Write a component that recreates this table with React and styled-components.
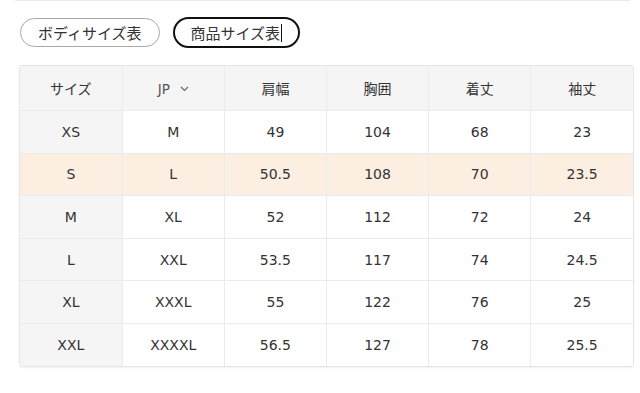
import React from 'react';
import styled, { createGlobalStyle } from 'styled-components';

const Global = createGlobalStyle`
    body {
        margin: 0;
        background: #fff;
        font-family: 'DejaVu Sans', 'Noto Sans CJK JP', sans-serif;
        color: #333;
    }
`

const sizes = [
    ['XS', 'M', '49', '104', '68', '23'],
    ['S', 'L', '50.5', '108', '70', '23.5'],
    ['M', 'XL', '52', '112', '72', '24'],
    ['L', 'XXL', '53.5', '117', '74', '24.5'],
    ['XL', 'XXXL', '55', '122', '76', '25'],
    ['XXL', 'XXXXL', '56.5', '127', '78', '25.5'],
];

export default function App() {
    return (
        <>
            <Global />
            <Page>
                <TopRule />
                <Tabs>
                    <Pill>ボディサイズ表</Pill>
                    <Pill $active>
                        商品サイズ表<Caret />
                    </Pill>
                </Tabs>
                <TableWrap>
                    <Table>
                        <thead>
                            <tr>
                                <HeadCell>サイズ</HeadCell>
                                <HeadCell>
                                    <Unit>
                                        JP
                                        <svg width="9" height="6" viewBox="0 0 9 6">
                                            <path d="M1 1l3.5 3.5L8 1" fill="none" stroke="#666" strokeWidth="1.1" />
                                        </svg>
                                    </Unit>
                                </HeadCell>
                                <HeadCell>肩幅</HeadCell>
                                <HeadCell>胸囲</HeadCell>
                                <HeadCell>着丈</HeadCell>
                                <HeadCell>袖丈</HeadCell>
                            </tr>
                        </thead>
                        <tbody>
                            {sizes.map((row, i) => (
                                <Row key={row[0]} $highlight={i === 1}>
                                    {row.map((v, j) => (
                                        <Cell key={j} $first={j === 0} $highlight={i === 1}>{v}</Cell>
                                    ))}
                                </Row>
                            ))}
                        </tbody>
                    </Table>
                </TableWrap>
            </Page>
        </>
    );
}

const Page = styled.div`
    width: 640px;
    height: 393px;
    overflow: hidden;
`
const TopRule = styled.div`
    height: 1px;
    margin: 0 10px 0 15px;
    background: #ebebeb;
`
const Tabs = styled.div`
    display: flex;
    align-items: center;
    gap: 13px;
    margin-top: 16px;
    padding-left: 20px;
`
const Pill = styled.div`
    display: flex;
    align-items: center;
    height: 27px;
    padding: 0 ${p => p.$active ? '16px' : '17px'};
    border: ${p => p.$active ? '2px solid #111' : '1px solid #a8a8a8'};
    margin: ${p => p.$active ? '0' : '1px 0'};
    border-radius: 16px;
    font-family: 'Noto Sans CJK JP', sans-serif;
    font-size: 15px;
    color: #333;
    line-height: 1;
`
const Caret = styled.span`
    display: inline-block;
    width: 1px;
    height: 18px;
    margin-left: 1px;
    background: #111;
`
const TableWrap = styled.div`
    margin: 17px 0 0 19px;
    width: 613px;
    border: 1px solid #e6e6e6;
    border-radius: 3px;
    box-shadow: 0 1px 2px rgba(0, 0, 0, 0.06);
    overflow: hidden;
`
const Table = styled.table`
    width: 100%;
    border-collapse: collapse;
    table-layout: fixed;
`
const HeadCell = styled.th`
    height: 44px;
    padding: 0;
    background: #f5f5f5;
    border-left: 1px solid #ebebeb;
    font-family: 'Noto Sans CJK JP', sans-serif;
    font-weight: normal;
    font-size: 14px;
    color: #333;
    &:first-child {
        border-left: none;
    }
`
const Unit = styled.span`
    display: inline-flex;
    align-items: center;
    gap: 10px;
    font-family: 'DejaVu Sans', sans-serif;
    font-size: 13.5px;
    color: #555;
`
const Row = styled.tr`
    background: ${p => p.$highlight ? '#fdeee2' : '#fff'};
`
const Cell = styled.td`
    height: 41.6px;
    padding: 0;
    text-align: center;
    border-top: 1px solid #ebebeb;
    border-left: 1px solid #ebebeb;
    font-size: 14px;
    color: #333;
    background: ${p => p.$highlight ? '#fdeee2' : p.$first ? '#f5f5f5' : '#fff'};
    &:first-child {
        border-left: none;
    }
`
